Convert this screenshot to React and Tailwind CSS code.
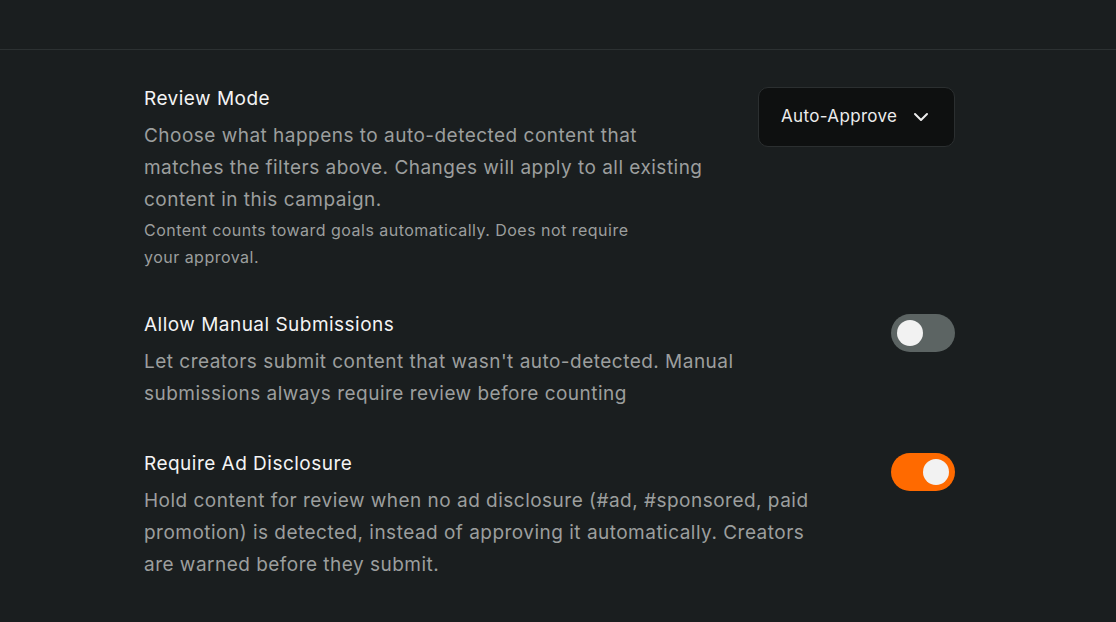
import React, { useState } from 'react';

const Toggle = ({ on, onChange }) => (
  <button
    onClick={() => onChange(!on)}
    className={`flex h-[38px] w-[64px] shrink-0 items-center rounded-full px-[6px] ${on ? 'bg-[#ff6a00]' : 'bg-[#5c6463]'}`}
  >
    <span className={`h-[26px] w-[26px] rounded-full bg-[#f2f2f2] ${on ? 'ml-auto' : ''}`} />
  </button>
);

const Row = ({ title, children, control }) => (
  <div className="flex items-start justify-between gap-12">
    <div className="min-w-0 flex-1">
      <h3 className="text-[19px] leading-[28px] font-normal text-[#f4f4f4]">{title}</h3>
      <div className="mt-[7px]">{children}</div>
    </div>
    <div>{control}</div>
  </div>
);

export default function App() {
  const [manual, setManual] = useState(false);
  const [disclosure, setDisclosure] = useState(true);

  return (
    <div className="min-h-[622px] bg-[#1a1e1f] font-['Inter',sans-serif] tracking-[0.03em]">
      <div className="h-[50px] border-b border-[#2c3132]" />

      <div className="ml-[144px] w-[811px] pt-[35px] flex flex-col gap-[40px]">
        <Row
          title="Review Mode"
          control={
            <button className="mt-[2px] flex h-[60px] w-[197px] items-center justify-between rounded-[10px] border border-[#2b2f30] bg-[#0e1010] pl-[22px] pr-[21px] text-[17px] tracking-[0.02em] text-[#ececec]">
              Auto-Approve
              <svg width="24" height="24" viewBox="0 0 24 24" fill="none" stroke="currentColor" strokeWidth="2" strokeLinecap="round" strokeLinejoin="round">
                <path d="m6 9 6 6 6-6" />
              </svg>
            </button>
          }
        >
          <p className="text-[19px] leading-[32px] text-[#9c9e9e]">
            Choose what happens to auto-detected content that matches the filters above. Changes will apply to all existing content in this campaign.
          </p>
          <p className="mt-[1px] max-w-[520px] text-[16px] leading-[27px] text-[#9c9e9e]">
            Content counts toward goals automatically. Does not require your approval.
          </p>
        </Row>

        <Row title="Allow Manual Submissions" control={<div className="pt-[3px]"><Toggle on={manual} onChange={setManual} /></div>}>
          <p className="max-w-[680px] text-[19px] leading-[32px] text-[#9c9e9e]">
            Let creators submit content that wasn't auto-detected. Manual submissions always require review before counting
          </p>
        </Row>

        <Row title="Require Ad Disclosure" control={<div className="pt-[3px]"><Toggle on={disclosure} onChange={setDisclosure} /></div>}>
          <p className="max-w-[680px] text-[19px] leading-[32px] text-[#9c9e9e]">
            Hold content for review when no ad disclosure (#ad, #sponsored, paid promotion) is detected, instead of approving it automatically. Creators are warned before they submit.
          </p>
        </Row>
      </div>
    </div>
  );
}
